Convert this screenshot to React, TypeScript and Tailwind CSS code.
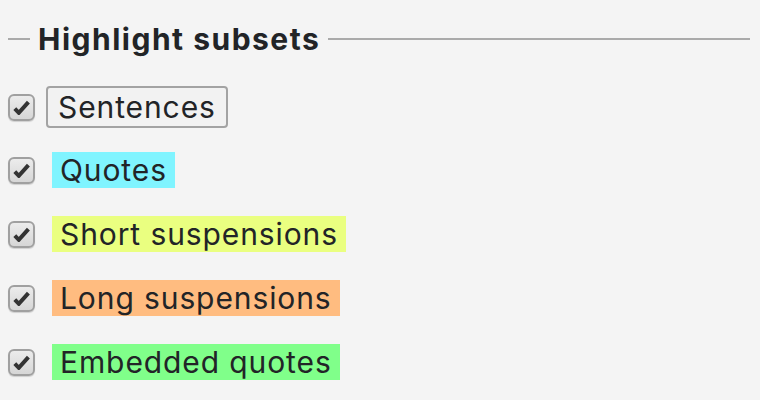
import React from "react";

const rows = [
    { label: "Quotes", bg: "bg-[#80f4ff]" },
    { label: "Short suspensions", bg: "bg-[#eaff80]" },
    { label: "Long suspensions", bg: "bg-[#ffbc80]" },
    { label: "Embedded quotes", bg: "bg-[#80ff8a]" },
];

function Check() {
    return (
        <span className="flex h-[27px] w-[27px] shrink-0 items-center justify-center rounded-[6px] border-2 border-[#a0a0a0] bg-gradient-to-b from-[#ececec] to-[#d6d6d6] shadow-[0_1px_1px_rgba(0,0,0,0.15)]">
            <svg width="17" height="15" viewBox="0 0 17 15">
                <path d="M1.8 8.6 L5.8 12.8 L15.4 2.2" fill="none" stroke="#333333" strokeWidth="4" strokeLinejoin="miter" strokeLinecap="butt" />
            </svg>
        </span>
    );
}

export default function App() {
    return (
        <div
            className="h-[400px] w-[760px] bg-[#f4f4f4] pt-[20px] text-[#222427]"
            style={{ fontFamily: "Inter, 'Noto Sans', sans-serif" }}
        >
            {/* Legend */}
            <div className="flex h-[38px] items-center pl-[8px] pr-[10px]">
                <div className="h-[2px] w-[22px] bg-[#aaaaaa]" />
                <span className="px-[8px] text-[30px] font-bold leading-none tracking-[1.5px]">
                    Highlight subsets
                </span>
                <div className="h-[2px] flex-1 bg-[#aaaaaa]" />
            </div>

            <div className="mt-[28px] flex flex-col pl-[8px]">
                <div className="flex h-[42px] items-center gap-[11px]">
                    <Check />
                    <button className="flex h-[42px] items-center rounded-[4px] border-2 border-[#a3a3a3] bg-[#f2f2f2] px-[10px] text-[30px] leading-none tracking-[0.9px]">
                        Sentences
                    </button>
                </div>

                <div className="mt-[24px] flex flex-col gap-[28px]">
                    {rows.map((r) => (
                        <div key={r.label} className="flex h-[36px] items-center gap-[17px]">
                            <Check />
                            <span className={`flex h-[36px] items-center px-[8px] text-[30px] leading-none tracking-[0.9px] ${r.bg}`}>
                                {r.label}
                            </span>
                        </div>
                    ))}
                </div>
            </div>
        </div>
    );
}
